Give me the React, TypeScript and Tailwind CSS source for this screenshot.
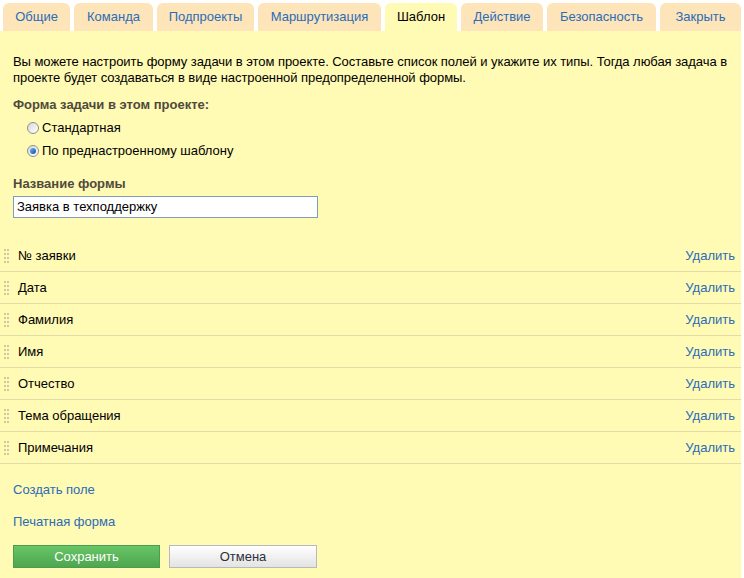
import React from "react";

const tabs = [
  { label: "Общие", w: "w-[67px]" },
  { label: "Команда", w: "w-[79px]" },
  { label: "Подпроекты", w: "w-[97px]" },
  { label: "Маршрутизация", w: "w-[123px]" },
  { label: "Шаблон", w: "w-[72px]", active: true },
  { label: "Действие", w: "w-[82px]" },
  { label: "Безопасность", w: "w-[109px]" },
  { label: "Закрыть", w: "w-[81px]" },
];

const fields = ["№ заявки", "Дата", "Фамилия", "Имя", "Отчество", "Тема обращения", "Примечания"];

const Grip = () => (
  <svg width="6" height="14" viewBox="0 0 6 14" className="shrink-0">
    {[0, 4, 8, 12].map((y) => (
      <g key={y} fill="#cfcaa2">
        <rect x="0" y={y} width="2" height="2" />
        <rect x="3" y={y} width="2" height="2" />
      </g>
    ))}
  </svg>
);

const Radio = ({ checked }: { checked?: boolean }) => (
  <span className="w-[12px] h-[12px] rounded-full border border-[#8e8f8f] bg-gradient-to-br from-[#d9d9d9] to-white flex items-center justify-center shrink-0">
    {checked && <span className="w-[6px] h-[6px] rounded-full bg-gradient-to-br from-[#6fb7f0] to-[#0f4f9a]" />}
  </span>
);

export default function App() {
  return (
    <div className="w-[744px] h-[578px] bg-white overflow-hidden text-[13px] text-black font-['Liberation_Sans',Arial,sans-serif]">
      <div className="flex gap-[4px] pl-[3px] pt-[3px]">
        {tabs.map((t) => (
          <div
            key={t.label}
            className={`${t.w} h-[28px] rounded-t-[6px] flex items-center justify-center ${
              t.active ? "bg-[#fffab4] text-black" : "bg-[#fde5b9] text-[#2b6cb8]"
            }`}
          >
            {t.label}
          </div>
        ))}
      </div>

      <div className="w-[741px] h-[547px] bg-[#fffab4] pt-[23px] leading-[16px]">
        <p className="pl-[13px] pr-0 tracking-[-0.05px]">
          Вы можете настроить форму задачи в этом проекте. Составьте список полей и укажите их типы. Тогда любая задача в
          проекте будет создаваться в виде настроенной предопределенной формы.
        </p>

        <div className="px-[13px] mt-[11px] font-bold text-[#4f4a3c]">Форма задачи в этом проекте:</div>
        <div className="pl-[27px] mt-[3px]">
          <label className="h-[23px] flex items-center gap-[3px]">
            <Radio />
            Стандартная
          </label>
          <label className="h-[23px] flex items-center gap-[3px]">
            <Radio checked />
            По преднастроенному шаблону
          </label>
        </div>

        <div className="px-[13px] mt-[14px] font-bold text-[#4f4a3c]">Название формы</div>
        <div className="px-[13px] mt-[4px]">
          <div className="w-[305px] h-[22px] border border-[#7f9db9] bg-white flex items-center px-[3px]">
            Заявка в техподдержку
          </div>
        </div>

        <div className="mt-[22px]">
          {fields.map((f) => (
            <div key={f} className="h-[32px] border-b border-[#e3dca6] flex items-center pl-[4px] pr-[6px]">
              <Grip />
              <span className="ml-[8px] flex-1">{f}</span>
              <span className="text-[#2b6cb8]">Удалить</span>
            </div>
          ))}
        </div>

        <div className="px-[13px] mt-[18px] text-[#2b6cb8]">Создать поле</div>
        <div className="px-[13px] mt-[16px] text-[#2b6cb8]">Печатная форма</div>

        <div className="px-[13px] mt-[15px] flex gap-[9px]">
          <button className="w-[147px] h-[23px] border border-[#4e9d4e] bg-gradient-to-b from-[#66c566] to-[#4fa64f] text-white">
            Сохранить
          </button>
          <button className="w-[148px] h-[23px] border border-[#b9b9b9] bg-gradient-to-b from-white to-[#e3e3e3] text-[#2e2e3c]">
            Отмена
          </button>
        </div>
      </div>
    </div>
  );
}
